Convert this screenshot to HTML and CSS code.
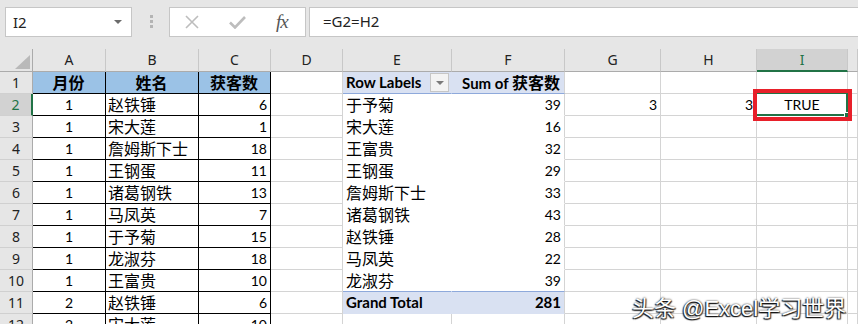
FILE: index.html
```html
<!DOCTYPE html>
<html lang="zh-CN">
<head>
    <meta charset="UTF-8">
    <title>Excel - 获客数</title>
    <link rel="stylesheet" href="styles.css">
</head>
<body>
<div class="app">
    <div class="topbar">
        <div class="namebox"><span>I2</span><span class="caret"></span></div>
        <div class="grip"><i></i><i></i><i></i></div>
        <div class="fnbox">
            <svg class="ico-x" width="14" height="14" viewBox="0 0 14 14"><path d="M1 1 L13 13 M13 1 L1 13" stroke="#bdbdbd" stroke-width="1.6" fill="none"/></svg>
            <svg class="ico-ok" width="17" height="13" viewBox="0 0 17 13"><path d="M1 6.5 L6 11.5 L16 1" stroke="#bdbdbd" stroke-width="2.6" fill="none"/></svg>
            <span class="fx">fx</span>
        </div>
        <div class="formula">=G2=H2</div>
    </div>

    <div class="sheet">
        <div class="row hdr">
            <div class="c corner"><span class="tri"></span></div>
            <div class="c h">A</div><div class="c h">B</div><div class="c h">C</div><div class="c h">D</div>
            <div class="c h">E</div><div class="c h">F</div><div class="c h">G</div><div class="c h">H</div>
            <div class="c h hsel">I</div><div class="c h"></div>
        </div>
        <div class="row">
            <div class="c rh">1</div>
            <div class="c t th zh">月份</div><div class="c t th zh">姓名</div><div class="c t th zh">获客数</div>
            <div class="c"></div>
            <div class="c pe ph head-e"><span>Row Labels</span><span class="drop"><i></i></span></div>
            <div class="c pf ph">Sum of <span class="zh">获客数</span></div>
            <div class="c"></div><div class="c"></div><div class="c"></div><div class="c"></div>
        </div>
        <div class="row">
            <div class="c rh rsel">2</div>
            <div class="c t ctr">1</div><div class="c t zh">赵铁锤</div><div class="c t r">6</div>
            <div class="c"></div>
            <div class="c pe zh">于予菊</div><div class="c pf">39</div>
            <div class="c r">3</div><div class="c r">3</div>
            <div class="c ctr sel">TRUE<span class="cursor"><i></i></span><span class="mark"></span></div>
            <div class="c"></div>
        </div>
        <div class="row">
            <div class="c rh">3</div>
            <div class="c t ctr">1</div><div class="c t zh">宋大莲</div><div class="c t r">1</div>
            <div class="c"></div>
            <div class="c pe zh">宋大莲</div><div class="c pf">16</div>
            <div class="c"></div><div class="c"></div><div class="c"></div><div class="c"></div>
        </div>
        <div class="row">
            <div class="c rh">4</div>
            <div class="c t ctr">1</div><div class="c t zh">詹姆斯下士</div><div class="c t r">18</div>
            <div class="c"></div>
            <div class="c pe zh">王富贵</div><div class="c pf">32</div>
            <div class="c"></div><div class="c"></div><div class="c"></div><div class="c"></div>
        </div>
        <div class="row">
            <div class="c rh">5</div>
            <div class="c t ctr">1</div><div class="c t zh">王钢蛋</div><div class="c t r">11</div>
            <div class="c"></div>
            <div class="c pe zh">王钢蛋</div><div class="c pf">29</div>
            <div class="c"></div><div class="c"></div><div class="c"></div><div class="c"></div>
        </div>
        <div class="row">
            <div class="c rh">6</div>
            <div class="c t ctr">1</div><div class="c t zh">诸葛钢铁</div><div class="c t r">13</div>
            <div class="c"></div>
            <div class="c pe zh">詹姆斯下士</div><div class="c pf">33</div>
            <div class="c"></div><div class="c"></div><div class="c"></div><div class="c"></div>
        </div>
        <div class="row">
            <div class="c rh">7</div>
            <div class="c t ctr">1</div><div class="c t zh">马凤英</div><div class="c t r">7</div>
            <div class="c"></div>
            <div class="c pe zh">诸葛钢铁</div><div class="c pf">43</div>
            <div class="c"></div><div class="c"></div><div class="c"></div><div class="c"></div>
        </div>
        <div class="row">
            <div class="c rh">8</div>
            <div class="c t ctr">1</div><div class="c t zh">于予菊</div><div class="c t r">15</div>
            <div class="c"></div>
            <div class="c pe zh">赵铁锤</div><div class="c pf">28</div>
            <div class="c"></div><div class="c"></div><div class="c"></div><div class="c"></div>
        </div>
        <div class="row">
            <div class="c rh">9</div>
            <div class="c t ctr">1</div><div class="c t zh">龙淑芬</div><div class="c t r">18</div>
            <div class="c"></div>
            <div class="c pe zh">马凤英</div><div class="c pf">22</div>
            <div class="c"></div><div class="c"></div><div class="c"></div><div class="c"></div>
        </div>
        <div class="row">
            <div class="c rh">10</div>
            <div class="c t ctr">1</div><div class="c t zh">王富贵</div><div class="c t r">10</div>
            <div class="c"></div>
            <div class="c pe pl zh">龙淑芬</div><div class="c pf pl">39</div>
            <div class="c"></div><div class="c"></div><div class="c"></div><div class="c"></div>
        </div>
        <div class="row">
            <div class="c rh">11</div>
            <div class="c t ctr">2</div><div class="c t zh">赵铁锤</div><div class="c t r">6</div>
            <div class="c"></div>
            <div class="c pe pt">Grand Total</div><div class="c pf pt">281</div>
            <div class="c"></div><div class="c"></div><div class="c"></div><div class="c"></div>
        </div>
        <div class="row">
            <div class="c rh">12</div>
            <div class="c t ctr">2</div><div class="c t zh">宋大莲</div><div class="c t r">10</div>
            <div class="c"></div>
            <div class="c"></div><div class="c"></div>
            <div class="c"></div><div class="c"></div><div class="c"></div><div class="c"></div>
        </div>
    </div>

    <div class="wm">头条 @Excel学习世界</div>
</div>
</body>
</html>
```

FILE: styles.css
```css
* {
    box-sizing: border-box;
}

body {
    margin: 0;
    width: 858px;
    height: 324px;
    overflow: hidden;
    background: #fff;
    font-family: Lato, "Noto Sans CJK SC", sans-serif;
    font-size: 14px;
    color: #000;
}

.app {
    position: relative;
    height: 324px;
    overflow: hidden;
}

/* formula bar */
.topbar {
    height: 49px;
    background: #e6e6e6;
    display: flex;
    align-items: flex-start;
    padding: 7px 0 0 5px;
    font-family: "Noto Sans", sans-serif;
    font-size: 15px;
}

.namebox {
    width: 127px;
    height: 30px;
    border: 1px solid #c6c6c6;
    background: #fff;
    display: flex;
    align-items: center;
    padding: 0 9px 0 7px;
    color: #222;
}

.namebox .caret {
    margin-left: auto;
    border-left: 4px solid transparent;
    border-right: 4px solid transparent;
    border-top: 4px solid #6b6b6b;
}

.grip {
    margin: 8px 16px 0 18px;
    display: flex;
    flex-direction: column;
    gap: 2px;
}

.grip i {
    display: block;
    width: 3px;
    height: 3px;
    background: #b4b4b4;
}

.fnbox {
    width: 137px;
    height: 30px;
    border: 1px solid #c6c6c6;
    background: #fff;
    display: flex;
    align-items: center;
    padding-left: 15px;
}

.ico-ok {
    margin-left: 30px;
}

.fx {
    margin-left: 30px;
    font-family: "Liberation Serif", serif;
    font-style: italic;
    font-size: 19px;
    color: #555;
    letter-spacing: -1px;
}

.formula {
    flex: 1;
    height: 30px;
    margin: 0 -3px 0 3px;
    border: 1px solid #c6c6c6;
    background: #fff;
    padding-left: 13px;
    line-height: 27px;
    color: #222;
}

/* sheet grid */
.row {
    display: grid;
    grid-template-columns: 33px 73px 93px 72px 72px 109px 113px 96px 96px 91px 1fr;
    height: 22px;
}

.row.hdr {
    height: 23px;
}

.c {
    border-right: 1px solid #d4d4d4;
    border-bottom: 1px solid #d4d4d4;
    padding: 0 3px;
    line-height: 21px;
    white-space: nowrap;
    overflow: hidden;
}

.zh {
    font-size: 16px;
}

.ctr {
    text-align: center;
}

.r {
    text-align: right;
}

.h {
    background: #e6e6e6;
    border-right-color: #c8c8c8;
    border-bottom-color: #ababab;
    text-align: center;
    font-family: "Noto Sans", sans-serif;
    font-size: 14px;
    line-height: 22px;
    color: #222;
}

.hsel {
    background: #d2d2d2;
    color: #217346;
    border-bottom: 2px solid #217346;
}

.corner {
    background: #e6e6e6;
    border-right-color: #ababab;
    border-bottom-color: #ababab;
    display: flex;
    justify-content: flex-end;
    align-items: flex-end;
    padding: 0 2px 2px 0;
}

.tri {
    width: 0;
    height: 0;
    border-left: 15px solid transparent;
    border-bottom: 14px solid #b9b9b9;
}

.rh {
    background: #e6e6e6;
    border-right-color: #ababab;
    border-bottom-color: #d0d0d0;
    text-align: center;
    font-family: "Noto Sans", sans-serif;
    font-size: 14px;
    color: #222;
    padding: 0;
}

.rsel {
    background: #d2d2d2;
    color: #217346;
    border-right: 2px solid #217346;
}

/* source table */
.t {
    border-right-color: #000;
    border-bottom-color: #000;
}

.t.zh {
    padding-left: 2px;
}

.th {
    background: #9bc2e6;
    font-weight: bold;
    text-align: center;
}

/* pivot table */
.pe {
    border-right-color: transparent;
    border-bottom-color: transparent;
    background: #fff;
}

.pf {
    border-bottom-color: transparent;
    text-align: right;
}

.ph {
    background: #d9e1f2;
    border-bottom-color: #8ea9db;
    font-weight: bold;
    font-size: 15px;
}

.pf.ph {
    padding-right: 4px;
}

.head-e {
    display: flex;
    align-items: center;
    padding-right: 2px;
}

.drop {
    margin-left: auto;
    width: 19px;
    height: 19px;
    border: 1px solid #c6c6c6;
    background: #f3f3f3;
    display: flex;
    align-items: center;
    justify-content: center;
}

.drop i {
    border-left: 4px solid transparent;
    border-right: 4px solid transparent;
    border-top: 4px solid #7a7a7a;
}

.pl {
    border-bottom-color: #8ea9db;
}

.pt {
    background: #d9e1f2;
    font-weight: bold;
    font-size: 15px;
}

/* active cell */
.sel {
    position: relative;
    overflow: visible;
}

.cursor {
    position: absolute;
    left: -2px;
    top: -2px;
    right: -1px;
    bottom: -1px;
    border: 2px solid #217346;
    z-index: 2;
}

.cursor i {
    position: absolute;
    right: -4px;
    bottom: -4px;
    width: 6px;
    height: 6px;
    background: #217346;
    border: 1px solid #fff;
}

.mark {
    position: absolute;
    left: -4px;
    top: -5px;
    right: -5px;
    bottom: -6px;
    border: 4px solid #e8202a;
    z-index: 3;
}

.wm {
    position: absolute;
    left: 632px;
    top: 290px;
    font-family: "Liberation Sans", "Noto Sans CJK SC", sans-serif;
    font-size: 22px;
    color: #fff;
    text-shadow: -1px 1px 1px #111, 1px 1px 1px #333, 0 0 2px #222;
    z-index: 5;
}
```
